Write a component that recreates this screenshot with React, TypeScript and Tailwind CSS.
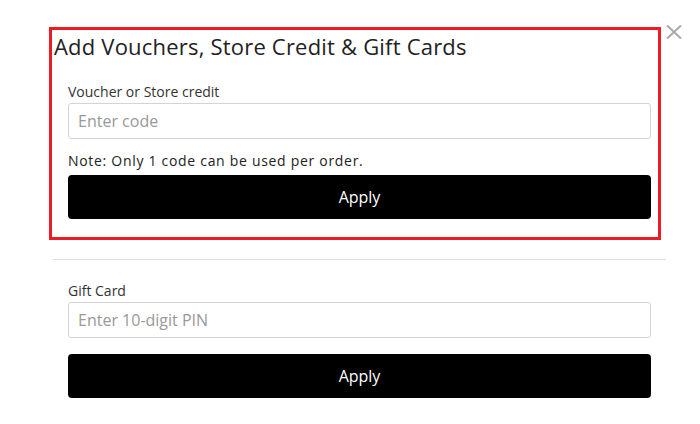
const FONT = { fontFamily: '"Open Sans", Lato, Arial, sans-serif' }

function Field({ label, placeholder }: { label: string; placeholder: string }) {
  return (
    <div>
      <label className="block text-[14px] leading-[17px] text-[#333] mb-[3px]">{label}</label>
      <input
        placeholder={placeholder}
        className="w-full h-[36px] rounded-[3px] border border-[#d4d4d4] px-[9px] text-[16px] text-[#333] placeholder:text-[#999] outline-none"
      />
    </div>
  )
}

export default function App() {
  return (
    <div className="relative w-[700px] h-[424px] bg-white overflow-hidden" style={FONT}>
      {/* close */}
      <button className="absolute left-[666px] top-[25px] text-[#aaa]">
        <svg width="16" height="14" viewBox="0 0 16 14" fill="none" stroke="currentColor" strokeWidth="2">
          <path d="M1 0.5 L15 13.5 M15 0.5 L1 13.5" />
        </svg>
      </button>

      {/* highlight annotation */}
      <div className="absolute left-[49px] top-[27px] w-[612px] h-[213px] border-[3px] border-[#ed1c24] pointer-events-none" />

      <div className="ml-[53px] w-[613px] pt-[33px]">
        <h2 className="pl-[1px] text-[22px] leading-[26px] tracking-[0.2px] text-[#222]">Add Vouchers, Store Credit &amp; Gift Cards</h2>

        {/* voucher */}
        <div className="px-[15px] pt-[24px] pb-[40px]">
          <Field label="Voucher or Store credit" placeholder="Enter code" />
          <p className="mt-[13px] text-[14px] leading-[17px] tracking-[0.7px] text-[#222]">Note: Only 1 code can be used per order.</p>
          <button className="mt-[6px] w-full h-[44px] rounded-[4px] bg-black text-white text-[16px]">Apply</button>
        </div>

        <div className="border-t border-[#dedede]" />

        {/* gift card */}
        <div className="px-[15px] pt-[22px]">
          <Field label="Gift Card" placeholder="Enter 10-digit PIN" />
          <button className="mt-[16px] w-full h-[44px] rounded-[4px] bg-black text-white text-[16px]">Apply</button>
        </div>
      </div>
    </div>
  )
}
